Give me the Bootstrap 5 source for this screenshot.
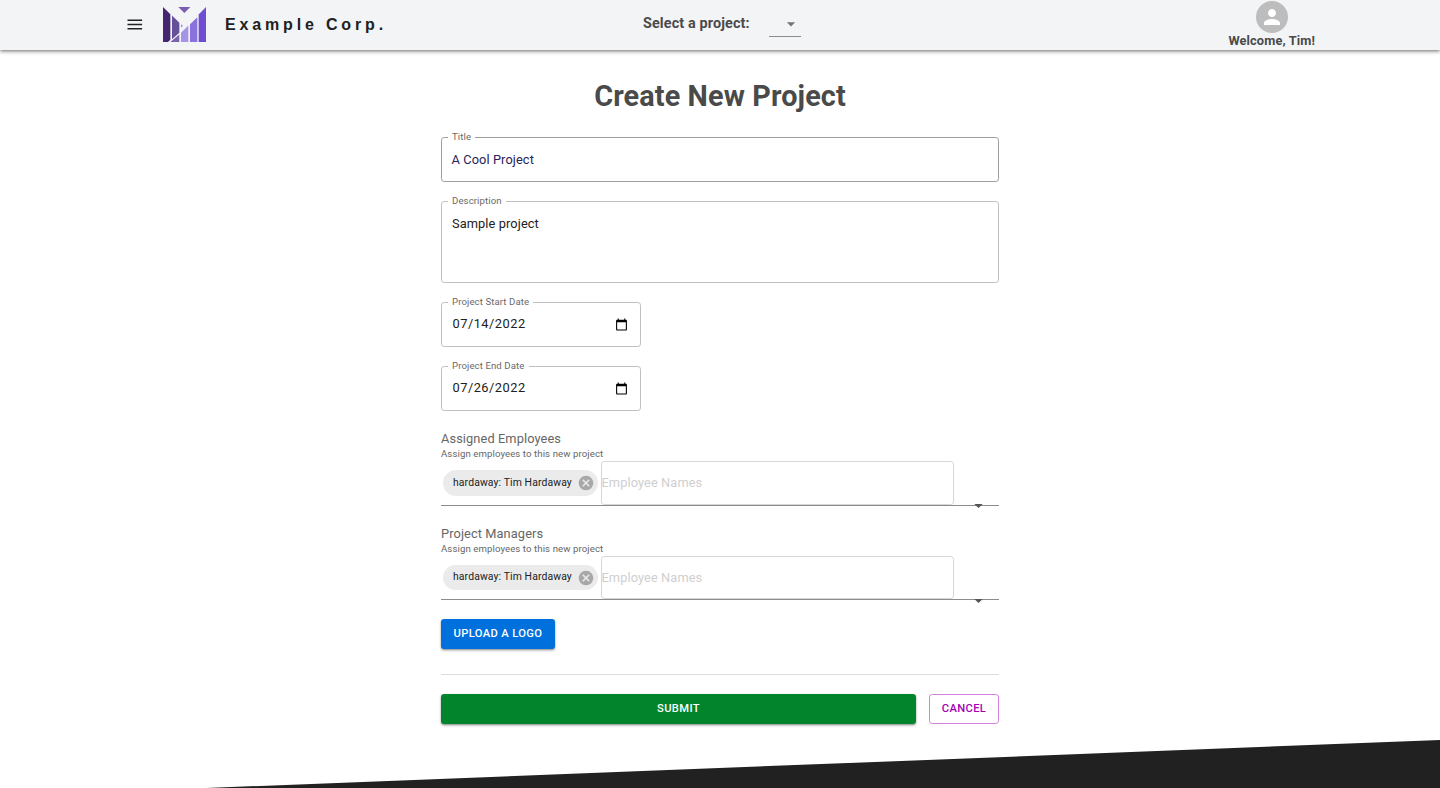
<!DOCTYPE html>
<html lang="en">
<head>
<meta charset="utf-8">
<meta name="viewport" content="width=device-width, initial-scale=1">
<title>Create New Project</title>
<link href="https://cdn.jsdelivr.net/npm/bootstrap@5.3.0/dist/css/bootstrap.min.css" rel="stylesheet">
<style>
body{font-family:Roboto,"Liberation Sans",sans-serif;font-size:12.8px;line-height:18px;letter-spacing:.1px;color:#212121;height:788px;overflow:hidden}
.topbar{height:50px;background:#f3f4f6;box-shadow:0 1px 3px rgba(0,0,0,.35),0 1px 5px rgba(0,0,0,.3);padding:0 125px 0 127px}
.menu-icon{margin-top:-1px}
.logo{margin:-1px 0 0 20px}
.brand-name{font:bold 16px/20px "Liberation Sans",sans-serif;letter-spacing:3.84px;margin-left:19px}
.picker{left:643px;top:0;height:50px}
.picker-label{font-size:14.4px;font-weight:700;color:#4a4a4a;letter-spacing:.12px;padding-top:15px;width:126px}
.picker-box{width:32px;height:37px;border-bottom:1px solid #8b8c8e}
.picker-box svg{margin-top:14px}
.user{color:#4a4a4a;font-weight:700;line-height:16px;letter-spacing:.12px}
.user svg{margin-top:1px}
.form-col{width:558px;padding-top:27px}
h1{font-size:28.8px;font-weight:700;line-height:38px;color:#4a4a4a;letter-spacing:.12px;margin-bottom:22px}
.field{height:45px;border:1px solid #c0c0c0;border-radius:3.2px;margin-bottom:19px;padding:13px 10px 0}
.field-title{border-color:#9e9e9e;color:#2a2359;padding-left:9.5px}
.field-area{height:82px}
.field-date{width:200px;padding:12px 12px 0 10.5px;letter-spacing:.5px}
.field-date svg{margin-top:2.5px}
.field>label{top:-8px;left:6px;background:#fff;padding:0 4px;font-size:9.6px;line-height:14px;letter-spacing:.1px;color:#6a6a6a}
.pick-title{color:#666;line-height:18px}
.hint{font-size:9.6px;line-height:12px;color:#666;letter-spacing:.1px;margin-bottom:1px}
.tags{height:45px;border-bottom:1px solid #8c8c8c}
.pill{height:26px;width:155px;margin-left:2px;border-radius:13px;background:#ebebeb;padding:0 4.5px 0 10px;font-size:10.4px;letter-spacing:.12px}
.names{width:353px;height:44px;margin-left:3px;border:1px solid #d7d7d7;border-radius:3.2px;color:#cfcfcf;line-height:42px;text-indent:-.5px}
.tags .arrow{right:16px;bottom:-3px}
.section-low{margin-top:19px}
.tags-low{height:44px}
.tags-low .pill{height:25px}
.tags-low .pill span{margin-top:-1px}
.tags-low .names{height:43px}
.tags-low .arrow{bottom:-4px}
.act{font-size:11.2px;font-weight:500;letter-spacing:.36px;line-height:16px;height:30px;padding:0;border:0;border-radius:3.2px;text-align:center;display:block}
.raised{color:#fff;box-shadow:0 1px 2px rgba(0,0,0,.35),0 2px 3px rgba(0,0,0,.14)}
.blue{width:114px;background:#0070dc;margin-top:19px}
.green{width:475px;background:#02842c}
.outlined{width:70px;color:#a600b4;background:#fff;border:1px solid #d483dc}
.rule{height:1px;background:#dedede;margin:25px 0 19px}
.slant{bottom:0;left:0;height:48px;width:100%;z-index:-1}
</style>
</head>
<body class="position-relative bg-white">
<header class="topbar d-flex align-items-center position-relative">
  <svg class="menu-icon" width="16" height="12" viewBox="0 0 16 12" fill="none" stroke="#222" stroke-width="1.4"><path d="M.5 1.200h14.600M.5 5.500h14.600M.5 9.800h14.600"/></svg>
  <svg class="logo" width="43" height="35" viewBox="24 20 129 106" preserveAspectRatio="none">
    <path fill="#432571" d="M24 20 46 42v77l-7 7H24z"/>
    <path fill="#65509a" d="M51 46 73 68v30L51 118z"/>
    <path fill="#7a62ad" d="M46 126 73 103v23z"/>
    <path fill="#7a5fb0" d="M70 20h36L88 38z"/>
    <path fill="#a08ce0" d="M78 72l6 5-6 6z"/>
    <path fill="#a593e8" d="M78 98 100 76v50H78z"/>
    <path fill="#8972dc" d="M105 72 127 51v75h-22z"/>
    <path fill="#6f4dd3" d="M131 43 153 20v106h-22z"/>
  </svg>
  <div class="brand-name">Example Corp.</div>
  <div class="picker position-absolute d-flex">
    <span class="picker-label">Select a project:</span>
    <div class="picker-box d-flex justify-content-end"><svg width="20" height="20" viewBox="0 0 24 24" fill="#757575"><path d="M7 10l5 5 5-5z"/></svg></div>
  </div>
  <div class="user ms-auto text-center align-self-start">
    <svg class="d-block mx-auto" width="32" height="32" viewBox="0 0 32 32"><circle cx="16" cy="16" r="16" fill="#bdbdbd"/><path transform="translate(4 4)" fill="#fff" d="M12 12c2.210 0 4-1.790 4-4s-1.790-4-4-4-4 1.790-4 4 1.790 4 4 4zm0 2c-2.670 0-8 1.340-8 4v2h16v-2c0-2.660-5.330-4-8-4z"/></svg>
    Welcome, Tim!
  </div>
</header>

<main class="form-col mx-auto">
  <h1 class="text-center">Create New Project</h1>
  <div class="field field-title position-relative"><label class="position-absolute">Title</label>A Cool Project</div>
  <div class="field field-area position-relative"><label class="position-absolute">Description</label>Sample project</div>
  <div class="field field-date position-relative d-flex justify-content-between"><label class="position-absolute">Project Start Date</label><span>07/14/2022</span>
    <svg width="13" height="13" viewBox="0 0 24 24"><path d="M20 3h-1V1h-2v2H7V1H5v2H4c-1.100 0-2 .9-2 2v16c0 1.100.9 2 2 2h16c1.100 0 2-.9 2-2V5c0-1.100-.9-2-2-2zm0 18H4V8h16v13z"/></svg></div>
  <div class="field field-date position-relative d-flex justify-content-between"><label class="position-absolute">Project End Date</label><span>07/26/2022</span>
    <svg width="13" height="13" viewBox="0 0 24 24"><path d="M20 3h-1V1h-2v2H7V1H5v2H4c-1.100 0-2 .9-2 2v16c0 1.100.9 2 2 2h16c1.100 0 2-.9 2-2V5c0-1.100-.9-2-2-2zm0 18H4V8h16v13z"/></svg></div>

  <section>
    <div class="pick-title">Assigned Employees</div>
    <div class="hint">Assign employees to this new project</div>
    <div class="tags d-flex align-items-center position-relative">
      <div class="pill d-flex align-items-center justify-content-between"><span>hardaway: Tim Hardaway</span><svg width="16" height="16" viewBox="1 1 22 22" fill="#a8a8a8"><path d="M12 2C6.470 2 2 6.470 2 12s4.470 10 10 10 10-4.470 10-10S17.530 2 12 2zm5 13.590L15.590 17 12 13.410 8.410 17 7 15.590 10.590 12 7 8.410 8.410 7 12 10.590 15.590 7 17 8.410 13.410 12 17 15.590z"/></svg></div>
      <div class="names">Employee Names</div>
      <svg class="arrow position-absolute" width="9" height="4" viewBox="0 0 9 4" fill="#555"><path d="M.3 0h8.400L4.500 4z"/></svg>
    </div>
  </section>
  <section class="section-low">
    <div class="pick-title">Project Managers</div>
    <div class="hint">Assign employees to this new project</div>
    <div class="tags tags-low d-flex align-items-center position-relative">
      <div class="pill d-flex align-items-center justify-content-between"><span>hardaway: Tim Hardaway</span><svg width="16" height="16" viewBox="1 1 22 22" fill="#a8a8a8"><path d="M12 2C6.470 2 2 6.470 2 12s4.470 10 10 10 10-4.470 10-10S17.530 2 12 2zm5 13.590L15.590 17 12 13.410 8.410 17 7 15.590 10.590 12 7 8.410 8.410 7 12 10.590 15.590 7 17 8.410 13.410 12 17 15.590z"/></svg></div>
      <div class="names">Employee Names</div>
      <svg class="arrow position-absolute" width="9" height="4" viewBox="0 0 9 4" fill="#555"><path d="M.3 0h8.400L4.500 4z"/></svg>
    </div>
  </section>
  <button class="act raised blue">UPLOAD A LOGO</button>
  <div class="rule"></div>
  <div class="d-flex justify-content-between">
    <button class="act raised green">SUBMIT</button>
    <button class="act outlined">CANCEL</button>
  </div>
</main>
<svg class="slant position-absolute" viewBox="0 0 1440 48" preserveAspectRatio="none"><path fill="#212121" d="M206 48 1440 0v48z"/></svg>
<script src="https://cdn.jsdelivr.net/npm/bootstrap@5.3.0/dist/js/bootstrap.bundle.min.js"></script>
</body>
</html>
